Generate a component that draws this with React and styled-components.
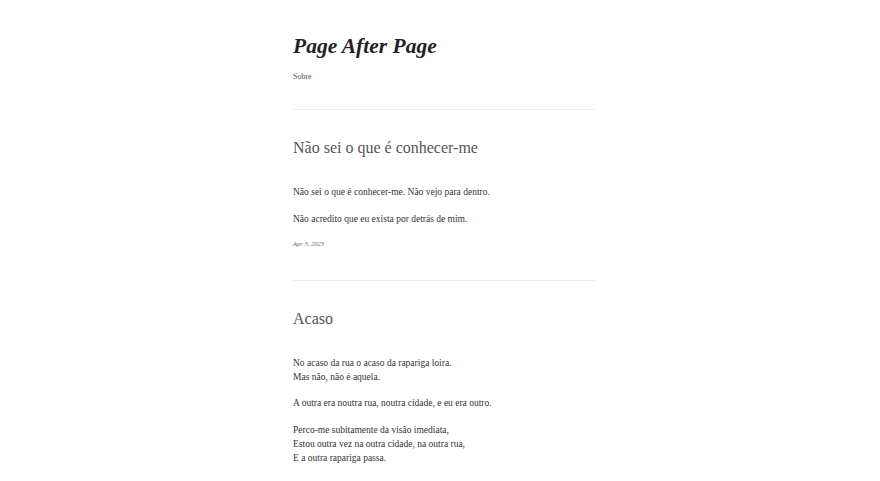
import React from "react";
import styled, { createGlobalStyle } from "styled-components";

const GlobalStyle = createGlobalStyle`
  body {
    margin: 0;
    background: #fff;
    font-family: "Liberation Serif", "DejaVu Serif", serif;
    color: #333;
  }
`;

const Page = styled.div`
  width: 302px;
  margin: 0 auto;
  padding: 30px 0 0 8px;
`;

const Header = styled.header`
  padding-bottom: 26px;
  border-bottom: 1px solid #eeeeee;
`;

const SiteTitle = styled.h1`
  margin: 0;
  font-size: 21.5px;
  line-height: 32px;
  font-weight: bold;
  font-style: italic;
  color: #222;
`;

const Nav = styled.nav`
  margin-top: 9px;
  display: flex;
  gap: 12px;
`;

const NavLink = styled.a`
  font-size: 8px;
  line-height: 12px;
  color: #4a5470;
  text-decoration: none;
`;

const Post = styled.article`
  padding: 28px 0 33px;
  border-bottom: ${({ $last }) => ($last ? "none" : "1px solid #eeeeee")};
`;

const PostTitle = styled.h2`
  margin: 0 0 27px;
  font-size: 16px;
  line-height: 20px;
  font-weight: normal;
  color: #555;
`;

const Body = styled.div`
  display: flex;
  flex-direction: column;
  gap: 12.5px;
`;

const Para = styled.p`
  margin: 0;
  font-size: 9.5px;
  line-height: 14px;
  color: #333;
`;

const PostDate = styled.time`
  display: block;
  margin-top: 14px;
  font-size: 6.5px;
  font-style: italic;
  color: #666;
`;

const posts = [
  {
    title: "Não sei o que é conhecer-me",
    paras: [
      ["Não sei o que é conhecer-me. Não vejo para dentro."],
      ["Não acredito que eu exista por detrás de mim."],
    ],
    date: "Apr 3, 2023",
  },
  {
    title: "Acaso",
    paras: [
      ["No acaso da rua o acaso da rapariga loira.", "Mas não, não é aquela."],
      ["A outra era noutra rua, noutra cidade, e eu era outro."],
      [
        "Perco-me subitamente da visão imediata,",
        "Estou outra vez na outra cidade, na outra rua,",
        "E a outra rapariga passa.",
      ],
    ],
  },
];

export default function App() {
  return (
    <>
      <GlobalStyle />
      <Page>
        <Header>
          <SiteTitle>Page After Page</SiteTitle>
          <Nav>
            <NavLink href="#">Sobre</NavLink>
          </Nav>
        </Header>
        {posts.map((post, i) => (
          <Post key={post.title} $last={i === posts.length - 1}>
            <PostTitle>{post.title}</PostTitle>
            <Body>
              {post.paras.map((lines, j) => (
                <Para key={j}>
                  {lines.map((line, k) => (
                    <React.Fragment key={k}>
                      {k > 0 && <br />}
                      {line}
                    </React.Fragment>
                  ))}
                </Para>
              ))}
            </Body>
            {post.date && <PostDate>{post.date}</PostDate>}
          </Post>
        ))}
      </Page>
    </>
  );
}
